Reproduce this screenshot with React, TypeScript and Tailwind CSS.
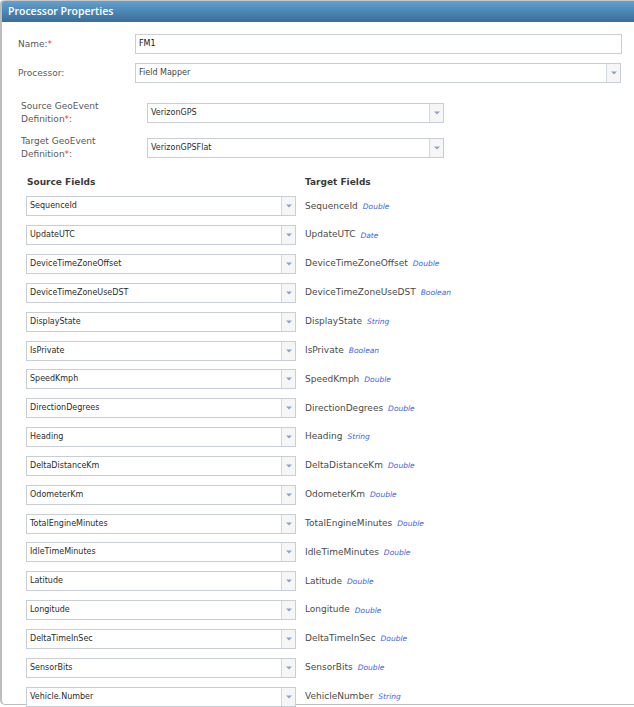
import { ReactNode } from "react";

const rows: [string, string, string][] = [
  ["SequenceId", "SequenceId", "Double"],
  ["UpdateUTC", "UpdateUTC", "Date"],
  ["DeviceTimeZoneOffset", "DeviceTimeZoneOffset", "Double"],
  ["DeviceTimeZoneUseDST", "DeviceTimeZoneUseDST", "Boolean"],
  ["DisplayState", "DisplayState", "String"],
  ["IsPrivate", "IsPrivate", "Boolean"],
  ["SpeedKmph", "SpeedKmph", "Double"],
  ["DirectionDegrees", "DirectionDegrees", "Double"],
  ["Heading", "Heading", "String"],
  ["DeltaDistanceKm", "DeltaDistanceKm", "Double"],
  ["OdometerKm", "OdometerKm", "Double"],
  ["TotalEngineMinutes", "TotalEngineMinutes", "Double"],
  ["IdleTimeMinutes", "IdleTimeMinutes", "Double"],
  ["Latitude", "Latitude", "Double"],
  ["Longitude", "Longitude", "Double"],
  ["DeltaTimeInSec", "DeltaTimeInSec", "Double"],
  ["SensorBits", "SensorBits", "Double"],
  ["Vehicle.Number", "VehicleNumber", "String"],
];

function Select({ value, className = "" }: { value: string; className?: string }) {
  return (
    <div className={`flex h-[20px] items-stretch border border-[#c9ced6] bg-white ${className}`}>
      <div className="flex flex-1 items-center truncate pl-[3px] text-[8px] text-[#2b2b2b]">{value}</div>
      <div className="flex w-[14px] items-center justify-center border-l border-[#d3d7de] bg-[#f6f6f6]">
        <svg width="6" height="4" viewBox="0 0 6 4">
          <path d="M0 0.5h6L3 3.5z" fill="#8ea3c2" />
        </svg>
      </div>
    </div>
  );
}

function Req() {
  return <span className="text-[#e0453a]">*</span>;
}

function Label({ children, className = "" }: { children: ReactNode; className?: string }) {
  return <div className={`shrink-0 text-[9px] leading-[13px] text-[#5a5a5a] ${className}`}>{children}</div>;
}

export default function App() {
  return (
    <div className="h-[707px] w-[634px] overflow-hidden bg-white font-['DejaVu_Sans',sans-serif]">
      <div className="h-[705px] rounded-bl-[5px] rounded-tl-[4px] border-b border-l-2 border-[#bdbdbd]">
        <div className="flex h-[22px] items-center rounded-tl-[3px] border-t border-[#c7c7c7] bg-[linear-gradient(180deg,#62a0cd_0%,#4a84b2_55%,#3b6d98_100%)] pl-[6px] font-['Open_Sans',sans-serif] text-[10.5px] font-semibold text-white">
          Processor Properties
        </div>

        <div className="pt-[12px]">
          <div className="flex items-center pl-[16px]">
            <Label className="w-[117px]">
              Name:<Req />
            </Label>
            <div className="flex h-[20px] w-[487px] items-center border border-[#c9ced6] pl-[3px] text-[8px] text-[#111]">
              FM1
            </div>
          </div>

          <div className="mt-[9px] flex items-center pl-[16px]">
            <Label className="w-[117px]">Processor:</Label>
            <Select value="Field Mapper" className="w-[486px] [&>div:first-child]:text-[#444]" />
          </div>

          <div className="mt-[17px] flex items-center pl-[19px]">
            <Label className="w-[126px]">
              Source GeoEvent
              <br />
              Definition<Req />:
            </Label>
            <Select value="VerizonGPS" className="w-[297px]" />
          </div>

          <div className="mt-[8.5px] flex items-center pl-[19px]">
            <Label className="w-[126px]">
              Target GeoEvent
              <br />
              Definition<Req />:
            </Label>
            <Select value="VerizonGPSFlat" className="w-[297px]" />
          </div>

          <div className="mt-[15px] grid grid-cols-[270px_1fr] gap-x-[9px] gap-y-[8.85px] pl-[24px]">
            <div className="pl-[1px] text-[9px] font-bold leading-[12px] text-[#3a3a3a]">Source Fields</div>
            <div className="text-[9px] font-bold leading-[12px] text-[#3a3a3a]">Target Fields</div>
            {rows.map(([src, tgt, type]) => (
              <div key={src} className="contents">
                <Select value={src} />
                <div className="flex items-center text-[9px] text-[#4a4a4a]">
                  {tgt}
                  <span className="ml-[5px] text-[7.5px] italic text-[#3d62e0]">{type}</span>
                </div>
              </div>
            ))}
          </div>
        </div>
      </div>
    </div>
  );
}
